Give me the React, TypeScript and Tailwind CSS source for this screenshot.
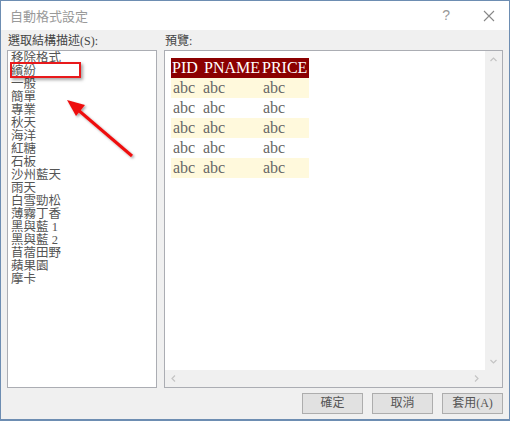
import React from 'react';

const schemes = [
  '移除格式',
  '繽紛',
  '一般',
  '簡單',
  '專業',
  '秋天',
  '海洋',
  '紅糖',
  '石板',
  '沙州藍天',
  '雨天',
  '白雪勁松',
  '薄霧丁香',
  '黑與藍 1',
  '黑與藍 2',
  '苜蓿田野',
  '蘋果園',
  '摩卡',
];

const rows = [0, 1, 2, 3, 4];

const cjk = { fontFamily: '"Liberation Serif", "Noto Sans CJK TC", serif' };

const App = () => {
  return (
    <div className="w-[510px] h-[421px] bg-white">
      <div className="relative w-[510px] h-[421px] flex flex-col border border-b-2 border-[#6d8db2] bg-[#f0f0f0]">
        {/* Title bar */}
        <div className="h-[29px] bg-white flex items-center pl-[9px] pr-[14px]">
          <span className="text-[13px] text-[#9a9a9a]" style={{ fontFamily: '"Noto Sans CJK TC", sans-serif' }}>
            自動格式設定
          </span>
          <div className="ml-auto flex items-center gap-[33px]">
            <span className="text-[14px] text-[#999] font-['Liberation_Sans',sans-serif]">?</span>
            <svg width="12" height="12" viewBox="0 0 12 12" className="text-[#888]">
              <path d="M1 1L11 11M11 1L1 11" stroke="currentColor" strokeWidth="1.1" fill="none" />
            </svg>
          </div>
        </div>

        {/* Body */}
        <div className="flex-1 flex gap-[7px] px-[6px] pt-[3px]">
          <div className="w-[150px] flex flex-col">
            <div className="h-[17px] text-[12px] leading-[17px] text-[#444] pl-[1px]" style={cjk}>
              選取結構描述(S):
            </div>
            <div className="h-[338px] bg-white border border-[#abadb3] pt-[1px] pl-[3px]">
              {schemes.map((s) => (
                <div key={s} className="h-[13px] text-[12.5px] leading-[13px] text-[#555]" style={cjk}>
                  {s}
                </div>
              ))}
            </div>
          </div>

          <div className="flex-1 flex flex-col">
            <div className="h-[17px] text-[12px] leading-[17px] text-[#444] pl-[1px]" style={cjk}>
              預覽:
            </div>
            <div className="h-[338px] border border-[#abadb3] flex flex-col">
              <div className="flex-1 flex">
                <div className="flex-1 bg-white pt-[7px] pl-[6px]">
                  <table className="border-collapse" style={{ fontFamily: '"Liberation Serif", serif' }}>
                    <thead>
                      <tr className="bg-[#8b0000] text-white text-[16px] leading-[20px]">
                        <th className="w-[30px] font-normal text-left pl-[1px]">PID</th>
                        <th className="w-[60px] font-normal text-left pl-[3px]">PNAME</th>
                        <th className="w-[48px] font-normal text-left pl-[1px] pr-[2px]">PRICE</th>
                      </tr>
                    </thead>
                    <tbody>
                      {rows.map((r) => (
                        <tr
                          key={r}
                          className={`${r % 2 === 0 ? 'bg-[#fff9dc]' : 'bg-white'} text-[16px] leading-[20px] text-[#666]`}
                        >
                          <td className="pl-[2px]">abc</td>
                          <td className="pl-[2px]">abc</td>
                          <td className="pl-[2px]">abc</td>
                        </tr>
                      ))}
                    </tbody>
                  </table>
                </div>
                {/* vertical scrollbar */}
                <div className="w-[17px] bg-[#f0f0f0] flex flex-col items-center justify-between py-[6px]">
                  <svg width="7" height="5" viewBox="0 0 7 5">
                    <path d="M0.5 4L3.5 1L6.5 4" stroke="#c4c4c4" strokeWidth="1.2" fill="none" />
                  </svg>
                  <svg width="7" height="5" viewBox="0 0 7 5">
                    <path d="M0.5 1L3.5 4L6.5 1" stroke="#c4c4c4" strokeWidth="1.2" fill="none" />
                  </svg>
                </div>
              </div>
              {/* horizontal scrollbar */}
              <div className="h-[17px] bg-[#f0f0f0] flex items-center justify-between pl-[6px] pr-[23px]">
                <svg width="5" height="7" viewBox="0 0 5 7">
                  <path d="M4 0.5L1 3.5L4 6.5" stroke="#c4c4c4" strokeWidth="1.2" fill="none" />
                </svg>
                <svg width="5" height="7" viewBox="0 0 5 7">
                  <path d="M1 0.5L4 3.5L1 6.5" stroke="#c4c4c4" strokeWidth="1.2" fill="none" />
                </svg>
              </div>
            </div>
          </div>
        </div>

        {/* Buttons */}
        <div className="h-[29px] flex justify-end gap-[9px] pr-[6px] pt-[3px]">
          {['確定', '取消', '套用(A)'].map((b) => (
            <button
              key={b}
              className="w-[61px] h-[21px] bg-[#e1e1e1] border border-[#adadad] text-[12px] text-[#555] leading-[19px]"
              style={cjk}
            >
              {b}
            </button>
          ))}
        </div>

        {/* Annotation: red box */}
        <div className="absolute left-[9px] top-[61px] w-[71px] h-[16px] border-2 border-[#e8191b] shadow-[2px_2px_3px_rgba(0,0,0,0.35)]" />

        {/* Annotation: arrow */}
        <svg className="absolute left-0 top-0 pointer-events-none" width="510" height="421" viewBox="0 0 510 421">
          <defs>
            <filter id="sh" x="-20%" y="-20%" width="140%" height="140%">
              <feDropShadow dx="1.5" dy="1.5" stdDeviation="1.2" floodColor="#000" floodOpacity="0.35" />
            </filter>
          </defs>
          <g filter="url(#sh)">
            <line x1="131" y1="155" x2="76" y2="108" stroke="#ee1111" strokeWidth="3" />
            <path d="M66 99L84 104L75 115Z" fill="#ee1111" />
          </g>
        </svg>
      </div>
    </div>
  );
};

export default App;
